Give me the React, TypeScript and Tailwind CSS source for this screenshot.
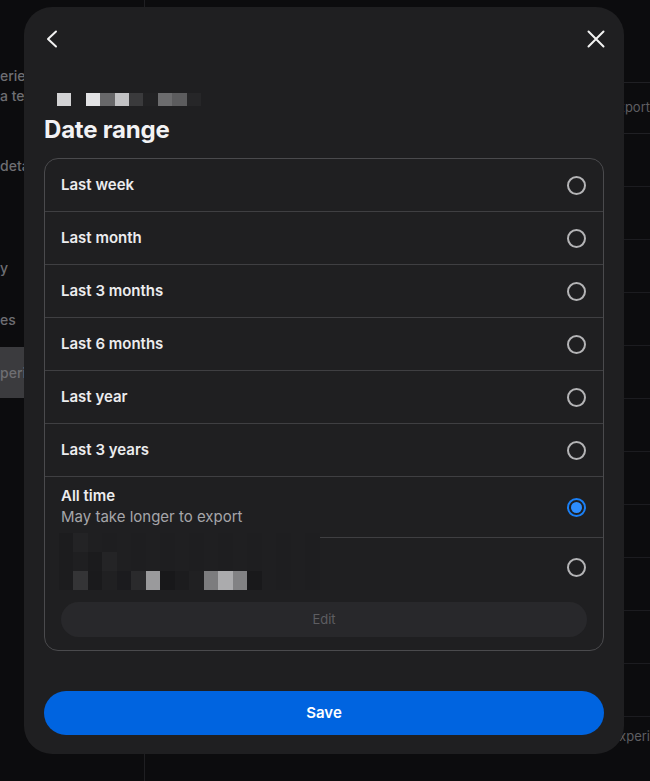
import { ReactNode } from 'react';

const options = [
  'Last week',
  'Last month',
  'Last 3 months',
  'Last 6 months',
  'Last year',
  'Last 3 years',
];

const labelBlocks = [
  '#d2d2d4', '#1f1f21', '#e2e2e4', '#68686a', '#c2c2c4', '#3a3a3c', '#222224', '#6c6c6e', '#5c5c5e', '#262628',
];

const mosaicRows = [
  ['#1f1f21', '#1c1c1e', '#232325', '#1f1f21', '#1e1e20', '#1f1f21', '#1e1e20', '#1f1f21', '#1e1e20', '#1f1f21', '#1e1e20', '#1f1f21', '#1e1e20', '#1f1f21', '#1e1e20', '#1f1f21', '#1e1e20', '#1f1f21', '#1e1e20'],
  ['#1f1f21', '#1c1c1e', '#1f1f21', '#1b1b1d', '#242426', '#1f1f21', '#1e1e20', '#1f1f21', '#1e1e20', '#1f1f21', '#1e1e20', '#1f1f21', '#1e1e20', '#1f1f21', '#1e1e20', '#1f1f21', '#1e1e20', '#1f1f21', '#1e1e20'],
  ['#1f1f21', '#1c1c1e', '#343436', '#1a1a1c', '#202022', '#1b1b1e', '#2a2a2c', '#9a9a9c', '#18181a', '#1c1c1e', '#202022', '#7c7c7e', '#ababad', '#828284', '#19191b', '#1f1f21', '#1e1e20', '#1f1f21', '#1e1e20'],
];

const Radio = ({ checked }: { checked?: boolean }) =>
  checked ? (
    <span className="flex h-[19px] w-[19px] items-center justify-center rounded-full border-2 border-[#1a7ff5]">
      <span className="h-[11px] w-[11px] rounded-full bg-[#2d8dff]" />
    </span>
  ) : (
    <span className="block h-[19px] w-[19px] rounded-full border-2 border-[#b4b4b6]" />
  );

const Row = ({ children, last }: { children: ReactNode; last?: boolean }) => (
  <div className={`flex items-center justify-between pl-4 pr-[17px] ${last ? '' : 'border-b border-[#3f3f42]'}`}>
    {children}
  </div>
);

const Backdrop = () => (
  <div className="flex h-full w-full">
    <div className="flex w-[145px] flex-col border-r border-[#1f1f22] pt-[66px] text-[14px] font-medium text-[#6e6e72]">
      <div className="leading-[20px]">erience</div>
      <div className="leading-[20px]">a technology</div>
      <div className="mt-[50px] leading-[20px]">details</div>
      <div className="mt-[82px] leading-[20px]">y</div>
      <div className="mt-[32px] leading-[20px]">es</div>
      <div className="mt-[17px] flex h-[51px] items-center bg-[#3b3b3e]">perience</div>
    </div>
    <div className="flex flex-1 flex-col pt-[82px] text-[13px] text-[#5e5e62]">
      <div className="flex h-[52px] items-center justify-end border-y border-[#202024] pr-0">xport</div>
      {Array.from({ length: 11 }).map((_, i) => (
        <div key={i} className="h-[53px] border-b border-[#1c1c20]" />
      ))}
      <div className="flex h-[40px] items-center justify-end">xperi</div>
    </div>
  </div>
);

export default function App() {
  return (
    <div
      className="relative h-[781px] w-[650px] overflow-hidden bg-[#0c0c0e]"
      style={{ fontFamily: 'Inter, "Noto Sans", sans-serif' }}
    >
      <Backdrop />

      <div className="absolute left-[24px] top-[7px] flex w-[600px] flex-col rounded-[28px] bg-[#1f1f21] px-5 pb-[19px] pt-5">
        <div className="-mx-1 flex h-6 items-center justify-between">
          <svg width="24" height="24" viewBox="0 0 24 24" fill="none" stroke="#f2f2f2" strokeWidth="2" strokeLinecap="round" strokeLinejoin="round">
            <path d="M16 4.5 L8 12 L16 19.5" />
          </svg>
          <svg width="24" height="24" viewBox="0 0 24 24" fill="none" stroke="#f2f2f2" strokeWidth="2" strokeLinecap="round">
            <path d="M4.5 4.5 L19.5 19.5 M19.5 4.5 L4.5 19.5" />
          </svg>
        </div>

        <div className="ml-[13px] mt-[42px] flex h-[13px]">
          {labelBlocks.map((c, i) => (
            <span key={i} className="h-full w-[14.4px]" style={{ backgroundColor: c }} />
          ))}
        </div>

        <h2 className="mt-[8px] text-[24px] font-bold leading-[32px] tracking-[-0.2px] text-[#f2f2f4]">Date range</h2>

        <div className="mt-[12px] flex flex-col overflow-hidden rounded-[14px] border border-[#4a4a4d]">
          {options.map((o) => (
            <Row key={o}>
              <div className="flex h-[52px] items-center text-[15px] font-semibold text-[#ececee]">{o}</div>
              <Radio />
            </Row>
          ))}
          <Row>
            <div className="flex h-[60px] flex-col justify-center">
              <div className="text-[15px] font-semibold leading-[20px] text-[#ececee]">All time</div>
              <div className="text-[15px] leading-[22px] text-[#a6a6aa]">May take longer to export</div>
            </div>
            <Radio checked />
          </Row>
          <div className="relative flex flex-col px-4 pb-[13px]">
            <div className="flex h-[58px] items-center justify-end pr-[1px]">
              <Radio />
            </div>
            <button className="mt-[6px] h-[35px] rounded-full bg-[#28282b] text-[13px] text-[#5e5e62]">Edit</button>
            <div className="absolute -left-px -top-[5px] flex flex-col">
              {mosaicRows.map((row, r) => (
                <div key={r} className="flex h-[19px]">
                  {row.map((c, i) => (
                    <span key={i} className="h-full w-[14.5px]" style={{ backgroundColor: c }} />
                  ))}
                </div>
              ))}
            </div>
          </div>
        </div>

        <button className="mt-10 h-[44px] rounded-full bg-[#0064e0] text-[15px] font-semibold text-white">Save</button>
      </div>
    </div>
  );
}
